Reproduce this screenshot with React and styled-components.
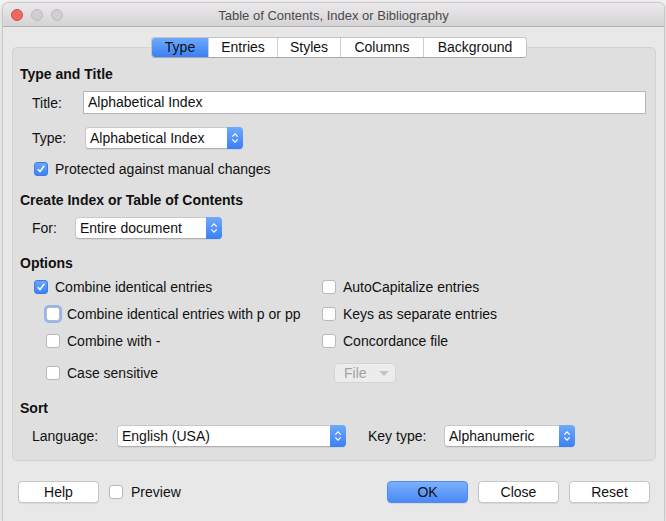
import React from 'react'
import styled, { createGlobalStyle } from 'styled-components'

const GlobalStyle = createGlobalStyle`
  html, body {
    margin: 0;
    padding: 0;
  }
  body {
    width: 666px;
    height: 521px;
    overflow: hidden;
    background: #f4f4f4;
    font-family: "Liberation Sans", Arial, sans-serif;
    font-size: 14px;
    color: #111;
  }
`

const Window = styled.div`
  margin: 3px 2px 0 3px;
  height: 518px;
  background: #e8e8e8;
  border-radius: 5px 5px 0 0;
  box-shadow: 0 0 0 1px #c8c8c8, 0 2px 8px rgba(0, 0, 0, 0.2);
  display: flex;
  flex-direction: column;
`

const TitleBar = styled.div`
  height: 22px;
  display: grid;
  grid-template-columns: 1fr auto 1fr;
  align-items: center;
  padding: 1px 8px 0;
  background: linear-gradient(#ebe9eb, #d5d3d5);
  border-bottom: 1px solid #b2b2b2;
  border-radius: 5px 5px 0 0;
`

const Lights = styled.div`
  display: flex;
  gap: 8px;
`

const Light = styled.span`
  width: 12px;
  height: 12px;
  border-radius: 50%;
  box-sizing: border-box;
  background: ${p => (p.$red ? '#ee6a5f' : '#d0ced0')};
  border: 1px solid ${p => (p.$red ? '#d05046' : '#bdbbbd')};
`

const Title = styled.div`
  font-size: 13px;
  color: #4a4a4a;
`

const Panel = styled.div`
  margin: 20px 8px 0 9px;
  background: #dfdfdf;
  border: 1px solid #d2d2d2;
  border-radius: 5px;
  padding: 0 7px 13px;
  display: flex;
  flex-direction: column;
`

const TabRow = styled.div`
  margin-top: -11px;
  display: flex;
  justify-content: center;
  padding-left: 10px;
`

const Tabs = styled.div`
  display: flex;
  background: #fff;
  border: 1px solid #c4c4c4;
  border-bottom-color: #a9a9a9;
  border-radius: 4px;
  overflow: hidden;
`

const Tab = styled.div`
  width: ${p => p.$w}px;
  height: 19px;
  line-height: 19px;
  text-align: center;
  font-size: 14px;
  color: #111;
  border-left: ${p => (p.$first ? 'none' : '1px solid #cfcfcf')};
  background: ${p => (p.$active ? 'linear-gradient(#6eaafb, #3a7ff6)' : '#fff')};
`

const Heading = styled.div`
  margin-top: ${p => p.$mt}px;
  height: 18px;
  line-height: 18px;
  font-weight: bold;
  font-size: 14px;
`

const Row = styled.div`
  margin-top: ${p => p.$mt}px;
  padding-left: 12px;
  display: flex;
  align-items: center;
`

const Label = styled.span`
  width: ${p => p.$w}px;
  flex-shrink: 0;
  margin-left: ${p => p.$ml || 0}px;
`

const TextInput = styled.div`
  flex: 1;
  margin-right: 2px;
  height: 21px;
  line-height: 21px;
  padding-left: 4px;
  background: #fff;
  border: 1px solid #b5b5b5;
`

const SelectBox = styled.div`
  width: ${p => p.$w}px;
  height: 22px;
  box-sizing: border-box;
  display: flex;
  background: #fff;
  border: 1px solid #c8c8c8;
  border-bottom-color: #b0b0b0;
  border-radius: 4px;
  box-shadow: 0 1px 1px rgba(0, 0, 0, 0.06);
`

const SelectText = styled.span`
  flex: 1;
  padding-left: 4px;
  line-height: 20px;
`

const SelectArrow = styled.span`
  width: 16px;
  margin: -1px -1px -1px 0;
  border-radius: 0 4px 4px 0;
  background: linear-gradient(#6eaafb, #3a7ff6);
  display: flex;
  align-items: center;
  justify-content: center;
`

const Chevrons = () => (
  <svg width="8" height="12" viewBox="0 0 8 12">
    <path d="M1.3 4.6 L4 1.9 L6.7 4.6 M1.3 7.4 L4 10.1 L6.7 7.4" fill="none" stroke="#fff" strokeWidth="1.3" />
  </svg>
)

const Select = ({ w, value }) => (
  <SelectBox $w={w}>
    <SelectText>{value}</SelectText>
    <SelectArrow>
      <Chevrons />
    </SelectArrow>
  </SelectBox>
)

const Box = styled.span`
  width: 14px;
  height: 14px;
  box-sizing: border-box;
  flex-shrink: 0;
  border-radius: 3px;
  display: flex;
  align-items: center;
  justify-content: center;
  background: ${p => (p.$checked ? 'linear-gradient(#6aa7fb, #3d82f6)' : '#fff')};
  border: 1px solid ${p => (p.$checked ? '#3a7be8' : '#b9b9b9')};
  box-shadow: ${p => (p.$focus ? '0 0 0 2px #8fb5f3' : 'none')};
`

const CheckRow = styled.label`
  height: 20px;
  display: flex;
  align-items: center;
  gap: ${p => p.$gap || 7}px;
  padding-left: ${p => p.$indent || 0}px;
  margin-left: ${p => p.$ml || 0}px;
`

const Check = ({ checked, focus, indent, children }) => (
  <CheckRow $indent={indent}>
    <Box $checked={checked} $focus={focus}>
      {checked && (
        <svg width="10" height="10" viewBox="0 0 10 10">
          <path d="M1.8 5.2 L4 7.6 L8.2 1.8" fill="none" stroke="#fff" strokeWidth="1.6" />
        </svg>
      )}
    </Box>
    <span>{children}</span>
  </CheckRow>
)

const OptionsGrid = styled.div`
  margin-top: 5px;
  padding-left: 14px;
  display: grid;
  grid-template-columns: 288px 1fr;
  grid-template-rows: 20px 20px 20px 25px;
  row-gap: 7px;
  align-items: end;
`

const FileButton = styled.div`
  margin-left: 12px;
  width: 62px;
  height: 20px;
  box-sizing: border-box;
  display: flex;
  align-items: center;
  gap: 12px;
  padding-left: 9px;
  color: #a3a3a3;
  background: #ececec;
  border: 1px solid #d4d4d4;
  border-radius: 4px;
`

const Caret = styled.span`
  width: 0;
  height: 0;
  border-left: 5px solid transparent;
  border-right: 5px solid transparent;
  border-top: 5px solid #c4c4c4;
`

const Footer = styled.div`
  margin-top: 20px;
  padding: 0 14px 0 15px;
  display: flex;
  align-items: center;
`

const Button = styled.div`
  width: 81px;
  height: 22px;
  box-sizing: border-box;
  line-height: 20px;
  text-align: center;
  border-radius: 4px;
  border: 1px solid ${p => (p.$primary ? '#4f8bf0' : '#c7c7c7')};
  background: ${p => (p.$primary ? 'linear-gradient(#7cb1fb, #4a88f7)' : '#fff')};
  box-shadow: 0 1px 1px rgba(0, 0, 0, 0.08);
  margin-left: ${p => p.$ml || 0}px;
`

const Spacer = styled.div`
  flex: 1;
`

export default function App() {
  return (
    <>
      <GlobalStyle />
      <Window>
        <TitleBar>
          <Lights>
            <Light $red />
            <Light />
            <Light />
          </Lights>
          <Title>Table of Contents, Index or Bibliography</Title>
          <div />
        </TitleBar>

        <Panel>
          <TabRow>
            <Tabs>
              <Tab $w={56} $first $active>Type</Tab>
              <Tab $w={68}>Entries</Tab>
              <Tab $w={62}>Styles</Tab>
              <Tab $w={82}>Columns</Tab>
              <Tab $w={102}>Background</Tab>
            </Tabs>
          </TabRow>

          <Heading $mt={7}>Type and Title</Heading>
          <Row $mt={8}>
            <Label $w={51}>Title:</Label>
            <TextInput>Alphabetical Index</TextInput>
          </Row>
          <Row $mt={13}>
            <Label $w={53}>Type:</Label>
            <Select w={158} value="Alphabetical Index" />
          </Row>
          <Row $mt={10}>
            <Check checked indent={2}>Protected against manual changes</Check>
          </Row>

          <Heading $mt={12}>Create Index or Table of Contents</Heading>
          <Row $mt={8}>
            <Label $w={43}>For:</Label>
            <Select w={147} value="Entire document" />
          </Row>

          <Heading $mt={15}>Options</Heading>
          <OptionsGrid>
            <Check checked>Combine identical entries</Check>
            <Check>AutoCapitalize entries</Check>
            <Check focus indent={12}>Combine identical entries with p or pp</Check>
            <Check>Keys as separate entries</Check>
            <Check indent={12}>Combine with -</Check>
            <Check>Concordance file</Check>
            <Check indent={12}>Case sensitive</Check>
            <CheckRow>
              <FileButton>
                File <Caret />
              </FileButton>
            </CheckRow>
          </OptionsGrid>

          <Heading $mt={16}>Sort</Heading>
          <Row $mt={8}>
            <Label $w={85}>Language:</Label>
            <Select w={229} value="English (USA)" />
            <Label $w={76} $ml={22}>Key type:</Label>
            <Select w={131} value="Alphanumeric" />
          </Row>
        </Panel>

        <Footer>
          <Button>Help</Button>
          <CheckRow $ml={10} $gap={8}>
            <Box />
            <span>Preview</span>
          </CheckRow>
          <Spacer />
          <Button $primary>OK</Button>
          <Button $ml={10}>Close</Button>
          <Button $ml={10}>Reset</Button>
        </Footer>
      </Window>
    </>
  )
}
